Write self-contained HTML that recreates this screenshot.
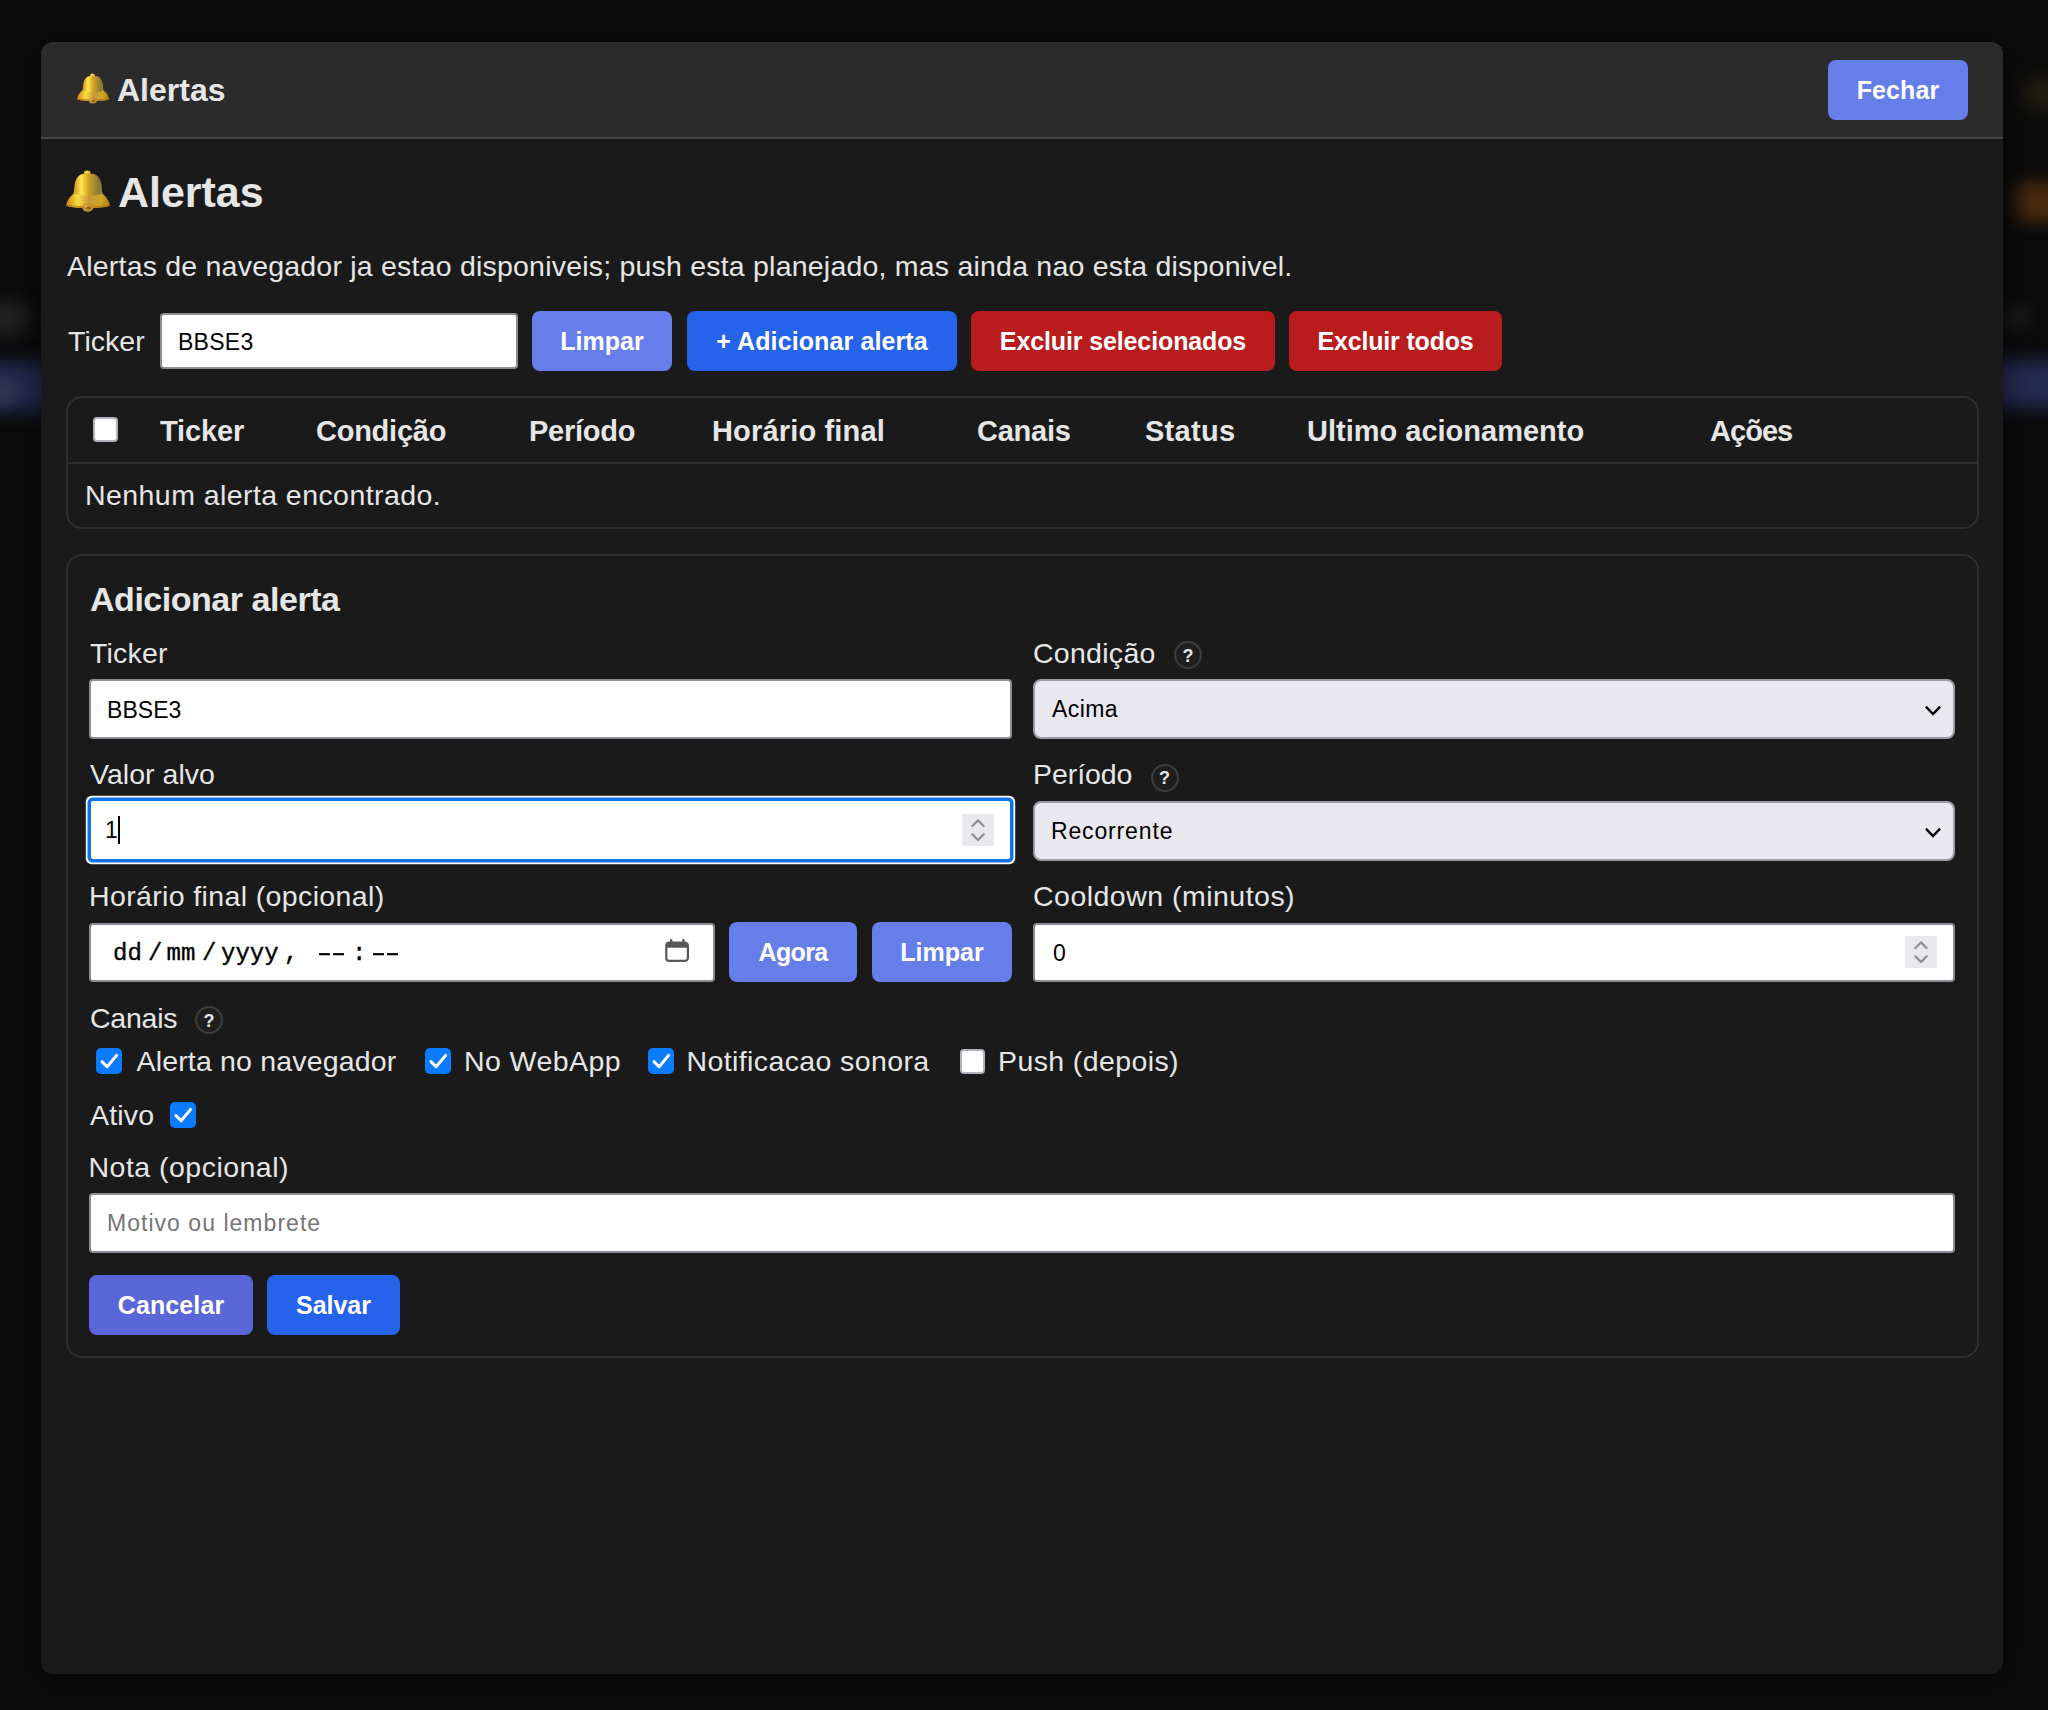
<!DOCTYPE html>
<html lang="pt-BR">
<head>
<meta charset="utf-8">
<title>Alertas</title>
<style>
*{box-sizing:border-box;margin:0;padding:0}
html,body{width:2048px;height:1710px;overflow:hidden;background:#0c0c0c}
body{position:relative;font-family:"Liberation Sans",sans-serif;color:#e6e6e6;font-size:28.5px}
.th{font-size:29px}
.abs{position:absolute}
.blob{position:absolute;border-radius:50%;filter:blur(14px)}
#modal{position:absolute;left:41px;top:42px;width:1962px;height:1632px;background:#1a1a1a;border-radius:12px;overflow:hidden;box-shadow:0 6px 36px 4px rgba(0,0,0,.5)}
#mhead{position:absolute;left:0;top:0;width:100%;height:97px;background:#2b2b2b;border-bottom:2px solid #454545}
#stage{position:absolute;left:0;top:0;width:2048px;height:1710px}
.t{position:absolute;white-space:nowrap;line-height:1;font-weight:normal}
.b{font-weight:bold}
.btn{position:absolute;height:60px;border-radius:8px;color:#fff;font-weight:bold;font-size:25px;display:flex;align-items:center;justify-content:center;white-space:nowrap;border:0;font-family:inherit;padding:0}
.c1{background:#667eea}.c2{background:#2563eb}.c3{background:#b91c1c}.c4{background:#5a67d8}
.box{position:absolute;border:2px solid #2f2f2f;border-radius:16px}
.inp{position:absolute;background:#fff;border:2px solid #8c8c95;border-radius:4px;color:#000;font-size:23px;display:flex;align-items:center;padding:2px 0 0 16px;white-space:nowrap}
.sel{position:absolute;background:#e9e8ee;border:2px solid #9c9ca6;border-radius:8px;color:#000;font-size:23px;display:flex;align-items:center;padding:2px 0 0 17px;white-space:nowrap}
.q{position:absolute;width:28px;height:28px;border:2px solid #3d3d3d;border-radius:50%;font-size:18px;font-weight:bold;display:flex;align-items:center;justify-content:center;color:#e6e6e6;background:#1e1e1e;padding-top:2px}
.cb{position:absolute;width:25px;height:25px;border-radius:4px;background:#fff;border:2px solid #b2b2bc}
.cb.on{background:#0b7bff;border:0;width:26px;height:26px;border-radius:5px}
.cb.on svg{position:absolute;left:0;top:0}
.spin{right:18px;top:12px;width:32px;height:32px;background:#e9e8ed}
.spin svg{position:absolute;left:0;top:0}
.seg{font-family:"Liberation Mono",monospace;font-size:24px;-webkit-text-stroke:.35px #000}
.dash{transform:scaleX(1.6);transform-origin:0 50%;letter-spacing:-5.6px}
#t_title{letter-spacing:0px}
#t_h2{letter-spacing:-0.04px}
#t_flabel{letter-spacing:0.04px}
#i_filter{letter-spacing:0.26px}
#b_add{letter-spacing:0.11px}
#b_exsel{letter-spacing:-0.12px}
#b_extodos{letter-spacing:-0.17px}
#th1{letter-spacing:-0.12px}
#th2{letter-spacing:-0.25px}
#th3{letter-spacing:-0.24px}
#th4{letter-spacing:0.17px}
#th5{letter-spacing:-0.24px}
#th6{letter-spacing:0.28px}
#th8{letter-spacing:-0.97px}
#t_empty{letter-spacing:0.43px}
#t_form{letter-spacing:-0.47px}
#l_ticker{letter-spacing:0.2px}
#i_ticker{letter-spacing:0.06px}
#l_valor{letter-spacing:0.03px}
#s_cond{letter-spacing:0.4px}
#l_per{letter-spacing:-0.07px}
#s_per{letter-spacing:0.85px}
#l_hora{letter-spacing:0.37px}
#l_canais{letter-spacing:-0.23px}
#c1{letter-spacing:0.17px}
#c2{letter-spacing:0.42px}
#c3{letter-spacing:0.39px}
#c4{letter-spacing:0.39px}
#l_ativo{letter-spacing:0.16px}
#b_agora{letter-spacing:-0.65px}
#l_nota{letter-spacing:0.48px}
#i_nota{letter-spacing:1.03px}
#b_cancel{letter-spacing:0.11px}
#b_salvar{letter-spacing:-0.04px}
#b_fechar{letter-spacing:0.12px}
#t_p{letter-spacing:0.21px}
#l_cond{letter-spacing:0.28px}
#l_cool{letter-spacing:0.48px}
</style>
</head>
<body>
<div class="blob" style="left:-20px;top:362px;width:80px;height:50px;background:#242b52;border-radius:6px;filter:blur(9px)"></div>
<div class="blob" style="left:-14px;top:380px;width:32px;height:22px;background:#343950;filter:blur(7px)"></div>
<div class="blob" style="left:-24px;top:300px;width:56px;height:36px;background:#212121;filter:blur(8px)"></div>
<div class="blob" style="left:1990px;top:360px;width:80px;height:48px;background:#252c54;border-radius:6px;filter:blur(9px)"></div>
<div class="blob" style="left:2016px;top:182px;width:50px;height:40px;background:#492b10;border-radius:8px;filter:blur(8px)"></div>
<div class="blob" style="left:2022px;top:78px;width:40px;height:32px;background:#262211;filter:blur(10px)"></div>
<div class="blob" style="left:2004px;top:304px;width:28px;height:26px;background:#1b1b1b;filter:blur(7px)"></div>

<div id="modal"><div id="mhead"></div></div>

<main id="stage">
<!-- modal header -->
<svg class="abs" style="left:77px;top:73px" width="32" height="31" viewBox="0 0 44 42"><defs><linearGradient id="bg1" x1="0" y1="0" x2="1" y2="0"><stop offset="0" stop-color="#b8801a"/><stop offset=".2" stop-color="#d9a020"/><stop offset=".34" stop-color="#ffe84e"/><stop offset=".5" stop-color="#d4a62a"/><stop offset=".74" stop-color="#8c7a32"/><stop offset=".92" stop-color="#93802f"/><stop offset="1" stop-color="#a98722"/></linearGradient><linearGradient id="bg2" x1="0" y1="0" x2="1" y2="0"><stop offset="0" stop-color="#c98a12"/><stop offset=".25" stop-color="#fbe046"/><stop offset=".52" stop-color="#c9953a"/><stop offset=".8" stop-color="#d4ac24"/><stop offset="1" stop-color="#b07f14"/></linearGradient></defs><ellipse cx="21.2" cy="2.7" rx="3.3" ry="2.3" fill="#e2bd38"/><ellipse cx="20.8" cy="2.1" rx="1.5" ry=".900" fill="#f7e27a"/><path d="M17 3.8 C12.5 5 9.8 8.5 8.8 14 C8.3 17.5 8.1 20 7.9 22 C7.5 24.5 5.5 25.5 4.2 27 C2.8 28.8 1.6 30.9 .900 33 C.500 34.2 .300 35.2 1 36 C6 37.4 14 37.9 22 37.9 C30 37.9 38 37.4 43.1 36 C43.8 35.2 43.6 34.2 43.2 33 C42.5 30.9 41.3 28.8 39.9 27 C38.6 25.5 36.6 24.5 36.2 22 C36 20 35.8 17.5 35.3 14 C34.3 8.5 31.6 5 27.1 3.8 Z" fill="url(#bg1)"/><path d="M7.6 23.6 C6.8 25.2 5.2 26 4.2 27 C2.8 28.8 1.6 30.9 .900 33 C.500 34.2 .300 35.2 1 36 C6 37.4 14 37.9 22 37.9 C30 37.9 38 37.4 43.1 36 C43.8 35.2 43.6 34.2 43.2 33 C42.5 30.9 41.3 28.8 39.9 27 C38.9 26 37.3 25.2 36.5 23.6 C30 26.8 14 26.8 7.6 23.6 Z" fill="url(#bg2)" opacity=".9"/><path d="M1 36 C6 37.4 14 37.9 22 37.9 C30 37.9 38 37.4 43.1 36 C43.6 35.4 43.6 34.8 43.4 34.2 C38 35.6 30 36.1 22 36.1 C14 36.1 6 35.6 .700 34.2 C.500 34.8 .500 35.4 1 36 Z" fill="#b8780e" opacity=".75"/><ellipse cx="21.8" cy="37.5" rx="5.5" ry="4.2" fill="#c9912c"/><ellipse cx="22.6" cy="38" rx="2.3" ry="1.8" fill="#8e5e14"/><ellipse cx="20" cy="36" rx="2" ry="1.1" fill="#e4b54a" opacity=".8"/></svg>
<h1 class="t b" id="t_title" style="left:117px;top:74px;font-size:32px">Alertas</h1>
<button class="btn c1" id="b_fechar" style="left:1828px;top:60px;width:140px">Fechar</button>

<!-- heading -->
<svg class="abs" style="left:66px;top:169.5px" width="44" height="42" viewBox="0 0 44 42"><ellipse cx="21.2" cy="2.7" rx="3.3" ry="2.3" fill="#e2bd38"/><ellipse cx="20.8" cy="2.1" rx="1.5" ry=".900" fill="#f7e27a"/><path d="M17 3.8 C12.5 5 9.8 8.5 8.8 14 C8.3 17.5 8.1 20 7.9 22 C7.5 24.5 5.5 25.5 4.2 27 C2.8 28.8 1.6 30.9 .900 33 C.500 34.2 .300 35.2 1 36 C6 37.4 14 37.9 22 37.9 C30 37.9 38 37.4 43.1 36 C43.8 35.2 43.6 34.2 43.2 33 C42.5 30.9 41.3 28.8 39.9 27 C38.6 25.5 36.6 24.5 36.2 22 C36 20 35.8 17.5 35.3 14 C34.3 8.5 31.6 5 27.1 3.8 Z" fill="url(#bg1)"/><path d="M7.6 23.6 C6.8 25.2 5.2 26 4.2 27 C2.8 28.8 1.6 30.9 .900 33 C.500 34.2 .300 35.2 1 36 C6 37.4 14 37.9 22 37.9 C30 37.9 38 37.4 43.1 36 C43.8 35.2 43.6 34.2 43.2 33 C42.5 30.9 41.3 28.8 39.9 27 C38.9 26 37.3 25.2 36.5 23.6 C30 26.8 14 26.8 7.6 23.6 Z" fill="url(#bg2)" opacity=".9"/><path d="M1 36 C6 37.4 14 37.9 22 37.9 C30 37.9 38 37.4 43.1 36 C43.6 35.4 43.6 34.8 43.4 34.2 C38 35.6 30 36.1 22 36.1 C14 36.1 6 35.6 .700 34.2 C.500 34.8 .500 35.4 1 36 Z" fill="#b8780e" opacity=".75"/><ellipse cx="21.8" cy="37.5" rx="5.5" ry="4.2" fill="#c9912c"/><ellipse cx="22.6" cy="38" rx="2.3" ry="1.8" fill="#8e5e14"/><ellipse cx="20" cy="36" rx="2" ry="1.1" fill="#e4b54a" opacity=".8"/></svg>
<h2 class="t b" id="t_h2" style="left:118px;top:171px;font-size:43px">Alertas</h2>
<p class="t" id="t_p" style="left:67px;top:252px">Alertas de navegador ja estao disponiveis; push esta planejado, mas ainda nao esta disponivel.</p>

<!-- filter row -->
<label class="t" id="t_flabel" style="left:68px;top:327px">Ticker</label>
<div class="inp" id="i_filter" style="left:160px;top:313px;width:358px;height:56px"><span class="tx">BBSE3</span></div>
<button class="btn c1" id="b_limpar" style="left:532px;top:311px;width:140px">Limpar</button>
<button class="btn c2" id="b_add" style="left:687px;top:311px;width:270px">+ Adicionar alerta</button>
<button class="btn c3" id="b_exsel" style="left:971px;top:311px;width:304px">Excluir selecionados</button>
<button class="btn c3" id="b_extodos" style="left:1289px;top:311px;width:213px">Excluir todos</button>

<!-- table -->
<div class="box" id="tablebox" style="left:66px;top:396px;width:1913px;height:133px"></div>
<div class="abs" style="left:68px;top:462px;width:1909px;height:2px;background:#2f2f2f"></div>
<span class="cb" style="left:93px;top:417px"></span>
<span class="t b th" id="th1" style="left:160px;top:417px">Ticker</span>
<span class="t b th" id="th2" style="left:316px;top:417px">Condição</span>
<span class="t b th" id="th3" style="left:529px;top:417px">Período</span>
<span class="t b th" id="th4" style="left:712px;top:417px">Horário final</span>
<span class="t b th" id="th5" style="left:977px;top:417px">Canais</span>
<span class="t b th" id="th6" style="left:1145px;top:417px">Status</span>
<span class="t b th" id="th7" style="left:1307px;top:417px">Ultimo acionamento</span>
<span class="t b th" id="th8" style="left:1710px;top:417px">Ações</span>
<span class="t" id="t_empty" style="left:85px;top:481px">Nenhum alerta encontrado.</span>

<!-- form -->
<div class="box" id="formbox" style="left:66px;top:554px;width:1913px;height:804px"></div>
<h3 class="t b" id="t_form" style="left:90px;top:582px;font-size:34px">Adicionar alerta</h3>

<label class="t" id="l_ticker" style="left:90px;top:639px">Ticker</label>
<div class="inp" id="i_ticker" style="left:89px;top:679px;width:923px;height:60px"><span class="tx">BBSE3</span></div>

<label class="t" id="l_cond" style="left:1033px;top:639px">Condição</label>
<span class="q" style="left:1174px;top:641px">?</span>
<div class="sel" id="s_cond" style="left:1033px;top:678.5px;width:922px;height:60.5px"><span class="tx">Acima</span><svg class="abs" style="right:11px;top:24px" width="18" height="12" viewBox="0 0 18 12"><path d="M2.8 2.6 L9 9 L15.2 2.6" fill="none" stroke="#000" stroke-width="2.5" stroke-linecap="square" stroke-linejoin="miter"/></svg></div>

<label class="t" id="l_valor" style="left:90px;top:760px">Valor alvo</label>
<div class="inp" id="i_valor" style="left:91px;top:801px;width:919px;height:57.5px;border:0;border-radius:2px;box-shadow:0 0 0 3.5px #0d74ea,0 0 0 5.2px #fff;padding-left:14px"><span class="tx">1</span><span class="abs" style="left:27px;top:14.5px;width:2px;height:28px;background:#000"></span><span class="abs spin" style="right:16.5px;top:12.5px"><svg width="32" height="32" viewBox="0 0 32 32"><path d="M10.4 12 L16 6.4 L21.6 12 M10.4 20.4 L16 26 L21.6 20.4" fill="none" stroke="#8f8f9a" stroke-width="2.2" stroke-linecap="round" stroke-linejoin="round"/></svg></span></div>

<label class="t" id="l_per" style="left:1033px;top:760px">Período</label>
<span class="q" style="left:1150.5px;top:763.5px">?</span>
<div class="sel" id="s_per" style="left:1033px;top:800.5px;width:922px;height:60.5px;padding-left:16px"><span class="tx">Recorrente</span><svg class="abs" style="right:11px;top:24px" width="18" height="12" viewBox="0 0 18 12"><path d="M2.8 2.6 L9 9 L15.2 2.6" fill="none" stroke="#000" stroke-width="2.5" stroke-linecap="square" stroke-linejoin="miter"/></svg></div>

<label class="t" id="l_hora" style="left:89px;top:882px">Horário final (opcional)</label>
<div class="inp" id="i_hora" style="left:89px;top:922.5px;width:625.5px;height:59.5px;padding-left:0">
 <span class="abs seg" style="left:22px;top:15px">dd</span><span class="abs seg" style="left:57px;top:15px">/</span><span class="abs seg" style="left:75.5px;top:15px">mm</span><span class="abs seg" style="left:111px;top:15px">/</span><span class="abs seg" style="left:130px;top:15px">yyyy</span><span class="abs seg" style="left:193px;top:15px">,</span><span class="abs seg dash" style="left:222px;top:15px">--</span><span class="abs seg" style="left:261px;top:15px">:</span><span class="abs seg dash" style="left:276px;top:15px">--</span>
 <svg class="abs" style="left:572px;top:13px" width="28" height="26" viewBox="0 0 28 26"><path d="M3.3 7.7 a3 3 0 0 1 3-3 h15.6 a3 3 0 0 1 3 3 v12.2 a3 3 0 0 1 -3 3 h-15.6 a3 3 0 0 1 -3 -3z" fill="none" stroke="#585858" stroke-width="2.2"/><path d="M3.3 7.7 a3 3 0 0 1 3-3 h15.6 a3 3 0 0 1 3 3 v2 h-21.6z" fill="#585858"/><rect x="7" y=".900" width="2.4" height="4.5" rx="1" fill="#585858"/><rect x="19.2" y=".900" width="2.4" height="4.5" rx="1" fill="#585858"/></svg></div>
<button class="btn c1" id="b_agora" style="left:729px;top:922px;width:128px">Agora</button>
<button class="btn c1" id="b_limpar2" style="left:872px;top:922px;width:140px">Limpar</button>

<label class="t" id="l_cool" style="left:1033px;top:882px">Cooldown (minutos)</label>
<div class="inp" id="i_cool" style="left:1033px;top:922.5px;width:922px;height:59.5px;padding-left:18px"><span class="tx">0</span><span class="abs spin" style="right:16px;top:11.5px"><svg width="32" height="32" viewBox="0 0 32 32"><path d="M10.4 12 L16 6.4 L21.6 12 M10.4 20.4 L16 26 L21.6 20.4" fill="none" stroke="#8f8f9a" stroke-width="2.2" stroke-linecap="round" stroke-linejoin="round"/></svg></span></div>

<label class="t" id="l_canais" style="left:90px;top:1004px">Canais</label>
<span class="q" style="left:195px;top:1006px">?</span>

<span class="cb on" style="left:96px;top:1048px"><svg width="26" height="26" viewBox="0 0 26 26"><path d="M6 13.6 L11.1 18.8 L20.6 7.4" fill="none" stroke="#fff" stroke-width="3" stroke-linecap="round" stroke-linejoin="round"/></svg></span>
<label class="t" id="c1" style="left:136.5px;top:1047px">Alerta no navegador</label>
<span class="cb on" style="left:425px;top:1048px"><svg width="26" height="26" viewBox="0 0 26 26"><path d="M6 13.6 L11.1 18.8 L20.6 7.4" fill="none" stroke="#fff" stroke-width="3" stroke-linecap="round" stroke-linejoin="round"/></svg></span>
<label class="t" id="c2" style="left:464px;top:1047px">No WebApp</label>
<span class="cb on" style="left:648px;top:1048px"><svg width="26" height="26" viewBox="0 0 26 26"><path d="M6 13.6 L11.1 18.8 L20.6 7.4" fill="none" stroke="#fff" stroke-width="3" stroke-linecap="round" stroke-linejoin="round"/></svg></span>
<label class="t" id="c3" style="left:686.5px;top:1047px">Notificacao sonora</label>
<span class="cb" style="left:960px;top:1048.5px"></span>
<label class="t" id="c4" style="left:998px;top:1047px">Push (depois)</label>

<label class="t" id="l_ativo" style="left:90px;top:1101px">Ativo</label>
<span class="cb on" style="left:170px;top:1101.5px"><svg width="26" height="26" viewBox="0 0 26 26"><path d="M6 13.6 L11.1 18.8 L20.6 7.4" fill="none" stroke="#fff" stroke-width="3" stroke-linecap="round" stroke-linejoin="round"/></svg></span>

<label class="t" id="l_nota" style="left:88.5px;top:1153px">Nota (opcional)</label>
<div class="inp" id="i_nota" style="left:89px;top:1193px;width:1866px;height:59.5px;color:#757575"><span class="tx">Motivo ou lembrete</span></div>

<button class="btn c4" id="b_cancel" style="left:89px;top:1275px;width:164px">Cancelar</button>
<button class="btn c2" id="b_salvar" style="left:267px;top:1275px;width:133px">Salvar</button>
</main>


</body>
</html>
